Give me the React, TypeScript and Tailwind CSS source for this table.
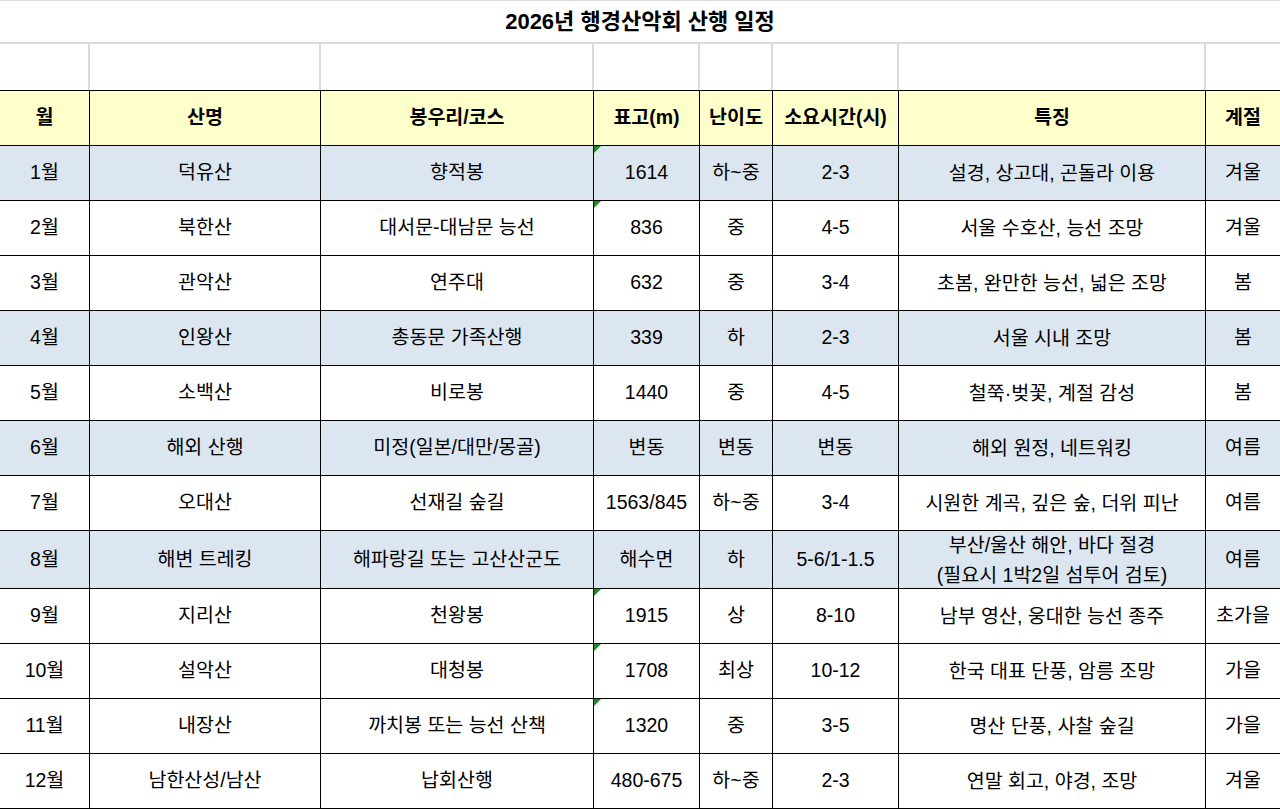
import React from 'react';

type Row = {
  month: string;
  name: string;
  course: string;
  height: string;
  level: string;
  time: string;
  feature: string[];
  season: string;
  blue?: boolean;
  flag?: boolean;
  tall?: boolean;
};

const rows: Row[] = [
  { month: '1월', name: '덕유산', course: '향적봉', height: '1614', level: '하~중', time: '2-3', feature: ['설경, 상고대, 곤돌라 이용'], season: '겨울', blue: true, flag: true },
  { month: '2월', name: '북한산', course: '대서문-대남문 능선', height: '836', level: '중', time: '4-5', feature: ['서울 수호산, 능선 조망'], season: '겨울', flag: true },
  { month: '3월', name: '관악산', course: '연주대', height: '632', level: '중', time: '3-4', feature: ['초봄, 완만한 능선, 넓은 조망'], season: '봄' },
  { month: '4월', name: '인왕산', course: '총동문 가족산행', height: '339', level: '하', time: '2-3', feature: ['서울 시내 조망'], season: '봄', blue: true },
  { month: '5월', name: '소백산', course: '비로봉', height: '1440', level: '중', time: '4-5', feature: ['철쭉·벚꽃, 계절 감성'], season: '봄' },
  { month: '6월', name: '해외 산행', course: '미정(일본/대만/몽골)', height: '변동', level: '변동', time: '변동', feature: ['해외 원정, 네트워킹'], season: '여름', blue: true },
  { month: '7월', name: '오대산', course: '선재길 숲길', height: '1563/845', level: '하~중', time: '3-4', feature: ['시원한 계곡, 깊은 숲, 더위 피난'], season: '여름' },
  { month: '8월', name: '해변 트레킹', course: '해파랑길 또는 고산산군도', height: '해수면', level: '하', time: '5-6/1-1.5', feature: ['부산/울산 해안, 바다 절경', '(필요시 1박2일 섬투어 검토)'], season: '여름', blue: true, tall: true },
  { month: '9월', name: '지리산', course: '천왕봉', height: '1915', level: '상', time: '8-10', feature: ['남부 영산, 웅대한 능선 종주'], season: '초가을', flag: true },
  { month: '10월', name: '설악산', course: '대청봉', height: '1708', level: '최상', time: '10-12', feature: ['한국 대표 단풍, 암릉 조망'], season: '가을', flag: true },
  { month: '11월', name: '내장산', course: '까치봉 또는 능선 산책', height: '1320', level: '중', time: '3-5', feature: ['명산 단풍, 사찰 숲길'], season: '가을', flag: true },
  { month: '12월', name: '남한산성/남산', course: '납회산행', height: '480-675', level: '하~중', time: '2-3', feature: ['연말 회고, 야경, 조망'], season: '겨울' },
];

const headers = ['월', '산명', '봉우리/코스', '표고(m)', '난이도', '소요시간(시)', '특징', '계절'];

const cols = 'grid grid-cols-[90px_231px_273px_106px_73px_126px_307px_74px]';

function Cell({ children, bg, tall, flag, last }: { children: React.ReactNode; bg: string; tall?: boolean; flag?: boolean; last?: boolean }) {
  return (
    <div
      className={`relative flex flex-col items-center justify-center text-center whitespace-nowrap border-b border-black ${last ? '' : 'border-r'} ${bg} ${
        tall ? 'h-[58px]' : 'h-[55px]'
      }`}
    >
      {flag && (
        <span className="absolute left-0 top-0 w-0 h-0 border-t-[7px] border-r-[7px] border-t-[#1f8a1f] border-r-transparent" />
      )}
      {children}
    </div>
  );
}

export default function App() {
  return (
    <div className="w-[1280px] h-[809px] bg-white text-black overflow-hidden font-['Liberation_Sans','Noto_Sans_CJK_KR',sans-serif] text-[19.5px]">
      <div className="h-[44px] border-t border-b-2 border-[#dcdcdc] flex items-center justify-center font-bold text-[22px]">
        2026년 행경산악회 산행 일정
      </div>
      <div className={`${cols} h-[46px]`}>
        {headers.map((h, i) => (
          <div key={h} className={`${i < 7 ? 'border-r-2 border-[#dcdcdc]' : ''}`} />
        ))}
      </div>
      <div className={`${cols} border-t border-black`}>
        {headers.map((h, i) => (
          <Cell key={h} bg="bg-[#ffffcc]" last={i === 7}>
            <span className="font-bold">{h}</span>
          </Cell>
        ))}
        {rows.map((r) => {
          const bg = r.blue ? 'bg-[#dce6f1]' : 'bg-white';
          return (
            <React.Fragment key={r.month}>
              <Cell bg={bg} tall={r.tall}>{r.month}</Cell>
              <Cell bg={bg} tall={r.tall}>{r.name}</Cell>
              <Cell bg={bg} tall={r.tall}>{r.course}</Cell>
              <Cell bg={bg} tall={r.tall} flag={r.flag}>{r.height}</Cell>
              <Cell bg={bg} tall={r.tall}>{r.level}</Cell>
              <Cell bg={bg} tall={r.tall}>{r.time}</Cell>
              <Cell bg={bg} tall={r.tall}>
                {r.feature.map((f) => (
                  <span key={f} className="leading-[30px]">{f}</span>
                ))}
              </Cell>
              <Cell bg={bg} tall={r.tall} last>{r.season}</Cell>
            </React.Fragment>
          );
        })}
      </div>
    </div>
  );
}
